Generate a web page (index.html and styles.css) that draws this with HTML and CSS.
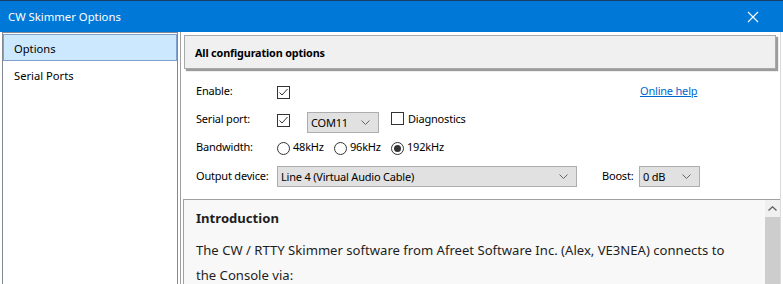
FILE: index.html
```html
<!DOCTYPE html>
<html>
<head>
<meta charset="utf-8">
<link rel="stylesheet" href="styles.css">
</head>
<body>
<div class="window">
  <div class="titlebar">
    <span class="title">CW Skimmer Options</span>
    <svg class="close" width="12" height="12" viewBox="0 0 12 12"><path d="M1 1 L11 11 M11 1 L1 11" stroke="#fff" stroke-width="1.1" fill="none"/></svg>
  </div>
  <div class="content">
    <div class="sidebar">
      <div class="item selected">Options</div>
      <div class="item">Serial Ports</div>
    </div>
    <div class="main">
      <div class="header">All configuration options</div>
      <div class="form">
        <div class="row r1">
          <span class="label">Enable:</span>
          <span class="check on en"><svg width="11" height="11" viewBox="0 0 11 11"><path d="M1.5 5.5 L4 8 L9.5 2" stroke="#333" stroke-width="1" fill="none"/></svg></span>
          <a class="help" href="#">Online help</a>
        </div>
        <div class="row r2">
          <span class="label">Serial port:</span>
          <span class="check on sp"><svg width="11" height="11" viewBox="0 0 11 11"><path d="M1.5 5.5 L4 8 L9.5 2" stroke="#333" stroke-width="1" fill="none"/></svg></span>
          <span class="combo com"><span>COM11</span><svg class="chev" width="9" height="5" viewBox="0 0 9 5"><path d="M0.5 0.5 L4.5 4.5 L8.5 0.5" stroke="#666" fill="none"/></svg></span>
          <span class="check diag"></span><span class="diagtext">Diagnostics</span>
        </div>
        <div class="row r3">
          <span class="label">Bandwidth:</span>
          <span class="radio"></span><span class="rtext">48kHz</span>
          <span class="radio"></span><span class="rtext">96kHz</span>
          <span class="radio on"></span><span class="rtext">192kHz</span>
        </div>
        <div class="row r4">
          <span class="label">Output device:</span>
          <span class="combo dev"><span>Line 4 (Virtual Audio Cable)</span><svg class="chev" width="9" height="5" viewBox="0 0 9 5"><path d="M0.5 0.5 L4.5 4.5 L8.5 0.5" stroke="#666" fill="none"/></svg></span>
          <span class="boost">Boost:</span>
          <span class="combo db"><span>0 dB</span><svg class="chev" width="9" height="5" viewBox="0 0 9 5"><path d="M0.5 0.5 L4.5 4.5 L8.5 0.5" stroke="#666" fill="none"/></svg></span>
        </div>
      </div>
      <div class="intro">
        <div class="introtext">
          <div class="h">Introduction</div>
          <p>The CW / RTTY Skimmer software from Afreet Software Inc. (Alex, VE3NEA) connects to the Console via:</p>
        </div>
        <div class="scrollbar">
          <div class="up"><svg width="9" height="5" viewBox="0 0 9 5"><path d="M0.5 4.5 L4.5 0.8 L8.5 4.5" stroke="#606060" stroke-width="1.3" fill="none"/></svg></div>
          <div class="thumb"></div>
        </div>
      </div>
    </div>
  </div>
</div>
</body>
</html>
```

FILE: styles.css
```css
html, body {
  margin: 0;
  padding: 0;
}
body {
  width: 783px;
  height: 284px;
  overflow: hidden;
  background: #fff;
  font-family: "Noto Sans", "Open Sans", sans-serif;
  font-size: 11.2px;
  color: #000;
}
.window {
  display: flex;
  flex-direction: column;
  height: 284px;
}
.titlebar {
  box-sizing: border-box;
  height: 32px;
  background: #0078d7;
  border-top: 1px solid #1c3d63;
  display: flex;
  align-items: center;
  padding-left: 8px;
  padding-right: 24px;
  color: #fff;
  font-size: 11.3px;
}
.title {
  flex: 1;
}
.close {
  display: block;
}
.content {
  flex: 1;
  display: flex;
  padding-left: 2px;
  min-height: 0;
}
.sidebar {
  box-sizing: border-box;
  width: 176px;
  border: 1px solid #828790;
  border-bottom: none;
  padding: 1px 0 0 0;
  margin-right: 2px;
}
.item {
  box-sizing: border-box;
  height: 27px;
  line-height: 25px;
  padding: 1px 0 0 10px;
  border: 1px solid transparent;
}
.item.selected {
  background: #cce8ff;
  border-color: #7da2ce;
}
.main {
  box-sizing: border-box;
  width: 601px;
  border-left: 1px solid #a0a0a0;
  border-right: 1px solid #dadada;
  display: flex;
  flex-direction: column;
  min-height: 0;
}
.header {
  box-sizing: border-box;
  margin: 3px 0 0 3px;
  width: 592px;
  height: 34px;
  background: #f0f0f0;
  border: 1px solid #a9a9a9;
  box-shadow: 2px 2px 1px #9c9c9c;
  font-weight: bold;
  font-size: 10.8px;
  letter-spacing: -0.15px;
  display: flex;
  align-items: center;
  padding-left: 10px;
}
.form {
  margin-top: 8px;
  padding-left: 15px;
  white-space: nowrap;
  font-size: 11px;
  letter-spacing: -0.2px;
}
.row {
  display: flex;
  align-items: center;
  height: 28px;
}
.r1 {
  height: 27px;
}
.r4 {
  margin-top: 1px;
}
.label {
  width: 81px;
  flex: none;
}
.check {
  box-sizing: border-box;
  width: 13px;
  height: 13px;
  border: 1px solid #333;
  background: #fff;
  display: inline-flex;
  align-items: center;
  justify-content: center;
  flex: none;
}
.en {
  margin-top: 4px;
}
.sp {
  margin-top: 4px;
}
.help {
  margin-left: 350px;
  color: #0066cc;
  text-decoration: underline;
}
.combo {
  box-sizing: border-box;
  height: 21px;
  background: #e1e1e1;
  border: 1px solid #adadad;
  display: flex;
  align-items: center;
  justify-content: space-between;
  padding: 0 8px 0 3px;
  flex: none;
}
.chev {
  display: block;
}
.com {
  width: 72px;
  margin-left: 17px;
  margin-top: 8px;
}
.diag {
  margin-left: 12px;
}
.diagtext {
  margin-left: 4px;
}
.radio {
  box-sizing: border-box;
  width: 13px;
  height: 13px;
  border: 1px solid #333;
  border-radius: 50%;
  background: #fff;
  display: inline-flex;
  align-items: center;
  justify-content: center;
  flex: none;
  margin-top: 5px;
}
.radio.on::after {
  content: "";
  width: 7px;
  height: 7px;
  border-radius: 50%;
  background: #333;
}
.rtext {
  margin-left: 3px;
  width: 41px;
  flex: none;
}
.dev {
  width: 300px;
  margin-top: 2px;
}
.boost {
  margin-left: 25px;
  width: 37px;
  flex: none;
}
.db {
  width: 61px;
  margin-top: 2px;
}
.intro {
  flex: 1;
  margin: 10px 0 0 2px;
  border-top: 1px solid #a0a0a0;
  border-left: 1px solid #a0a0a0;
  background: #f8f8f8;
  display: flex;
  min-height: 0;
}
.introtext {
  flex: 1;
  padding: 8px 0 0 12px;
  font-size: 13.1px;
  color: #1e1e1e;
}
.introtext .h {
  font-weight: bold;
  height: 20px;
  line-height: 20px;
}
.introtext p {
  margin: 10px 0 0 0;
  line-height: 25px;
  width: 545px;
}
.scrollbar {
  width: 15px;
  display: flex;
  flex-direction: column;
  background: #f0f0f0;
}
.up {
  height: 17px;
  display: flex;
  align-items: center;
  justify-content: center;
}
.thumb {
  flex: 1;
  background: #cdcdcd;
}
```
